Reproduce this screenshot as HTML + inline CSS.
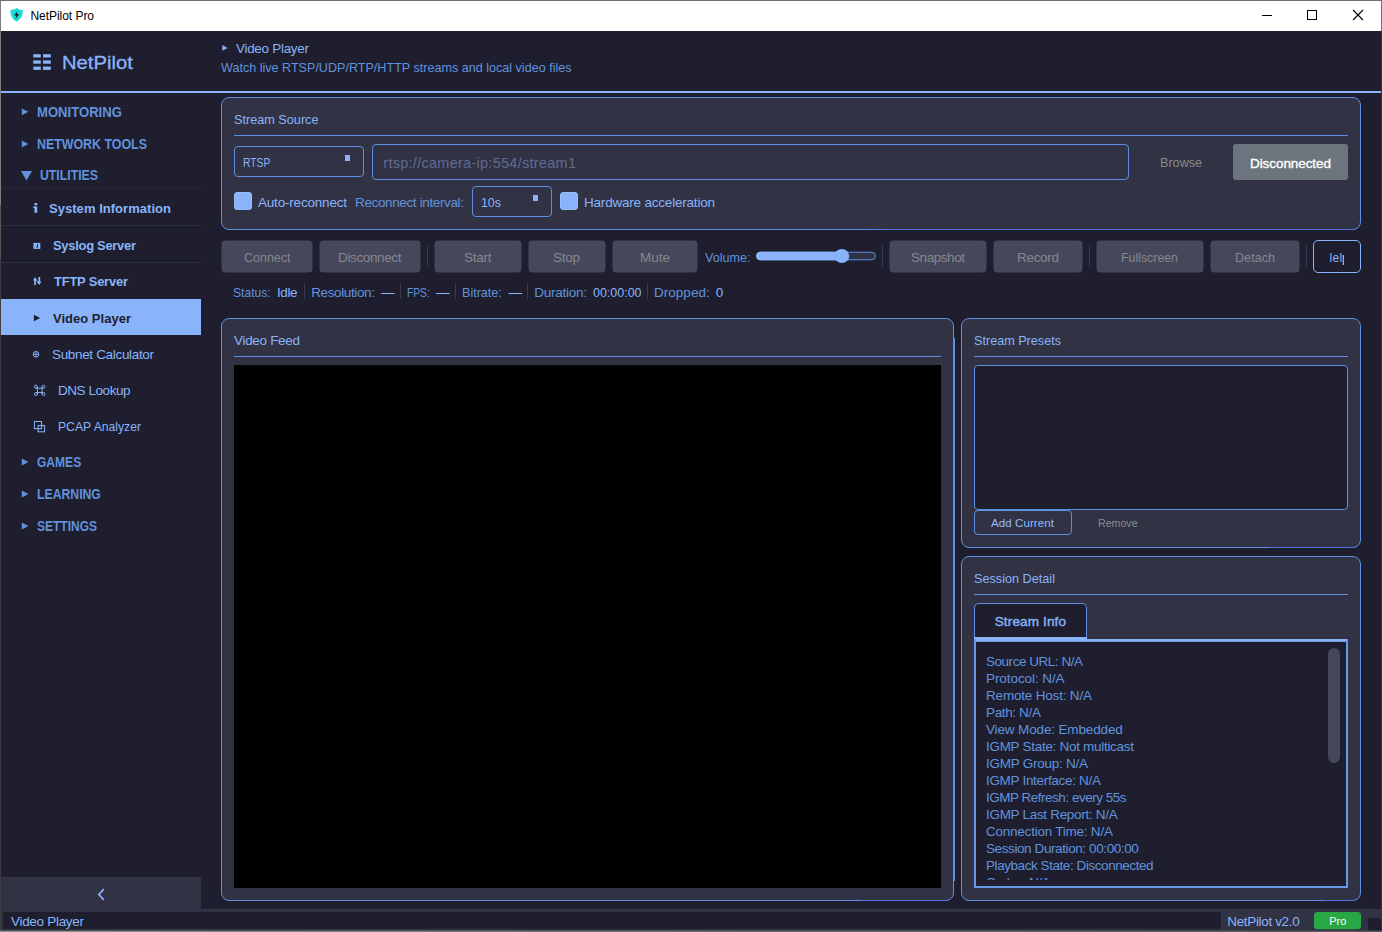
<!DOCTYPE html>
<html lang="en">
<head>
<meta charset="utf-8">
<title>NetPilot Pro</title>
<style>
*{box-sizing:border-box;margin:0;padding:0}
html,body{width:1382px;height:932px;overflow:hidden;background:#1e1e2e}
body{position:relative;font-family:"Liberation Sans",sans-serif;font-size:13px;color:#89b4fa}
.a{position:absolute}
.t{position:absolute;white-space:nowrap;line-height:20px;height:20px}
.panel{position:absolute;background:#313244;border:1px solid #5d90e0;border-radius:8px}
.hl{position:absolute;height:1px;background:#5d90e0}
.btn{position:absolute;top:240.6px;height:31.8px;background:#45475a;border-radius:4.5px}
.vsep{position:absolute;top:245px;height:22px;width:1px;background:#3a3b4f}
.ssep{position:absolute;top:283px;height:16px;width:1px;background:#3a3b4f}
.field{position:absolute;background:#313244;border:1px solid #5d90e0;border-radius:4px}
.chk{position:absolute;width:18px;height:18px;top:192px;background:#89b4fa;border:1px solid #96befb;border-radius:3px}
.dot{position:absolute;width:5px;height:6px;background:#89b4fa}
.nsep{position:absolute;left:1px;width:200px;height:1px;background:#2d2f47}
</style>
</head>
<body>
<!-- window chrome -->
<div class="a" style="left:0;top:0;width:1382px;height:31px;background:#fff"></div>
<div class="a" style="left:0;top:0;width:1382px;height:1px;background:#6f6f6f"></div>
<div class="a" style="left:0;top:0;width:1px;height:932px;background:linear-gradient(180deg,#7d7d7d 0,#7d7d7d 205px,#585858 205px,#585858 258px,#3e3e42 258px)"></div>
<div class="a" style="left:1381px;top:0;width:1px;height:31px;background:#6f6f6f"></div>
<!-- app icon -->
<svg class="a" style="left:10.3px;top:8.2px" width="13.2" height="13.6" viewBox="0 0 13.2 13.6">
<path d="M6.6 0 C5.1 1.3 3 1.9 0.5 1.9 C0.2 6.2 1.3 10.6 6.6 13.6 C11.9 10.6 13 6.2 12.7 1.9 C10.2 1.9 8.1 1.3 6.6 0 Z" fill="#19dcd2"/>
<path d="M7.6 2.9 L4 7.5 H6.3 L5.5 10.9 L9.3 6.1 H6.9 Z" fill="#10202b"/>
</svg>
<!-- caption buttons -->
<div class="a" style="left:1262px;top:15px;width:10px;height:1px;background:#000"></div>
<div class="a" style="left:1307px;top:10px;width:10px;height:10px;border:1px solid #000"></div>
<svg class="a" style="left:1352px;top:9px" width="12" height="12" viewBox="0 0 12 12"><path d="M1 1 L11 11 M11 1 L1 11" stroke="#000" stroke-width="1.1" fill="none"/></svg>

<!-- header accent line -->
<div class="a" style="left:1px;top:91px;width:1381px;height:2px;background:#89b4fa"></div>

<!-- logo icon -->
<svg class="a" style="left:33px;top:54px" width="18" height="16" viewBox="0 0 18 16"><g fill="#89b4fa">
<rect x="0.3" y="0.2" width="7.5" height="3.3"/><rect x="10" y="0.2" width="7.8" height="3.3"/>
<rect x="0.3" y="6.4" width="7.5" height="3.3"/><rect x="10" y="6.4" width="7.8" height="3.3"/>
<rect x="0.3" y="12.6" width="7.5" height="3.3"/><rect x="10" y="12.6" width="7.8" height="3.3"/>
</g></svg>

<!-- sidebar -->
<div class="nsep" style="top:188px;background:#252639"></div>
<div class="nsep" style="top:225px"></div>
<div class="nsep" style="top:262px"></div>
<div class="a" style="left:1px;top:299px;width:200px;height:36px;background:#89b4fa"></div>
<div class="a" style="left:1px;top:877px;width:200px;height:32px;background:#313244"></div>
<!-- sidebar arrows + icons -->
<svg class="a" style="left:0;top:93px" width="201" height="816" viewBox="0 93 201 816">
 <g fill="#6191dc">
  <path d="M21.8 108.4 L28.4 111.8 L21.8 115.2 Z"/>
  <path d="M21.8 140.6 L28.4 144 L21.8 147.4 Z"/>
  <path d="M21 170.9 L32 170.9 L26.5 180.4 Z"/>
  <path d="M21.8 458.6 L28.4 462 L21.8 465.4 Z"/>
  <path d="M21.8 490.6 L28.4 494 L21.8 497.4 Z"/>
  <path d="M21.8 522.6 L28.4 526 L21.8 529.4 Z"/>
 </g>
 <!-- i -->
 <g fill="#89b4fa">
  <rect x="34.5" y="203" width="2.7" height="2.3"/>
  <path d="M33.2 206.6 H37.2 V212.7 H34.5 V208.1 H33.2 Z"/>
  <!-- syslog square -->
  <rect x="33.4" y="242.9" width="6.9" height="6"/>
  <!-- tftp -->
  <path d="M34.2 285 V280.6 H32.9 L35 277 L37.1 280.6 H35.9 V285 Z"/>
  <path d="M38.4 277 V281.4 H37.1 L39.3 285 L41.5 281.4 H40.2 V277 Z"/>
  <path d="M35.6 278.2 L38.8 283.6 L38.2 284 L35 278.6 Z"/>
 </g>
 <path d="M37 244.1 H37.9 V247.4 H36.1 V246.5 H37 Z" fill="#1e1e2e"/>
 <!-- selected play -->
 <path d="M33.9 314.8 L40.2 318 L33.9 321.2 Z" fill="#1e1e2e"/>
 <!-- circled plus -->
 <g stroke="#89b4fa" fill="none" stroke-width="1">
  <circle cx="36" cy="354.3" r="2.8"/>
  <path d="M33.2 354.3 H38.8 M36 351.5 V357.1" stroke-width="0.9"/>
  <!-- command glyph -->
  <path d="M37.4 386.7 V394.1 M42 386.7 V394.1 M35.9 388.2 H43.5 M35.9 392.6 H43.5" stroke-width="0.95"/>
  <circle cx="35.9" cy="386.7" r="1.5" stroke-width="0.95"/><circle cx="43.5" cy="386.7" r="1.5" stroke-width="0.95"/>
  <circle cx="35.9" cy="394.1" r="1.5" stroke-width="0.95"/><circle cx="43.5" cy="394.1" r="1.5" stroke-width="0.95"/>
  <!-- overlapped squares -->
  <rect x="34.4" y="421.5" width="7.2" height="7.2"/>
  <rect x="38" y="425.6" width="6.6" height="6.2"/>
 </g>
 <path d="M103.8 889.2 L98.9 894.5 L103.8 899.8" stroke="#89b4fa" stroke-width="1.7" fill="none"/>
</svg>

<!-- page header arrow -->
<svg class="a" style="left:221px;top:43px" width="8" height="10" viewBox="0 0 8 10"><path d="M1.3 2 L6.5 4.9 L1.3 7.8 Z" fill="#89b4fa"/></svg>

<!-- Stream Source panel -->
<div class="panel" style="left:221px;top:97px;width:1140px;height:133px"></div>
<div class="hl" style="left:234px;top:135px;width:1114px"></div>
<div class="field" style="left:234px;top:146px;width:130px;height:31px"></div>
<div class="dot" style="left:345px;top:155px"></div>
<div class="field" style="left:372px;top:144px;width:757px;height:36px"></div>
<div class="a" style="left:1233px;top:144px;width:115px;height:36px;background:#6c757d;border-radius:3px"></div>
<div class="chk" style="left:234px"></div>
<div class="field" style="left:472px;top:186px;width:80px;height:31px"></div>
<div class="dot" style="left:533px;top:195px"></div>
<div class="chk" style="left:560px"></div>

<!-- toolbar -->
<svg class="a" style="left:0;top:236px" width="1382" height="42" viewBox="0 236 1382 42"><rect x="221.5" y="240.55" width="91" height="31.9" rx="4" fill="#45475a"/><rect x="319.5" y="240.55" width="101" height="31.9" rx="4" fill="#45475a"/><rect x="434.5" y="240.55" width="87" height="31.9" rx="4" fill="#45475a"/><rect x="528.5" y="240.55" width="77" height="31.9" rx="4" fill="#45475a"/><rect x="612.5" y="240.55" width="85" height="31.9" rx="4" fill="#45475a"/><rect x="889.5" y="240.55" width="97" height="31.9" rx="4" fill="#45475a"/><rect x="993.5" y="240.55" width="89" height="31.9" rx="4" fill="#45475a"/><rect x="1096.5" y="240.55" width="107" height="31.9" rx="4" fill="#45475a"/><rect x="1210.5" y="240.55" width="89" height="31.9" rx="4" fill="#45475a"/><rect x="756.5" y="252.2" width="119" height="7.6" rx="3.8" fill="#313244" stroke="#5d90e0" stroke-width="1"/><rect x="756" y="251.7" width="88" height="8.6" rx="4.3" fill="#89b4fa"/><ellipse cx="841.8" cy="255.95" rx="7.4" ry="7.05" fill="#89b4fa"/></svg>
<div class="vsep" style="left:427px"></div>
<div class="vsep" style="left:882px"></div>
<div class="vsep" style="left:1089px"></div>
<div class="vsep" style="left:1306px"></div>
<div class="a" style="left:1313px;top:240px;width:48px;height:33px;border:1px solid #89b4fa;border-radius:5px;background:#1e1e2e"></div>
<svg class="a" style="left:1340px;top:250px" width="8" height="18" viewBox="1340 250 8 18"><rect x="1342.7" y="255" width="1.3" height="10" fill="#89b4fa"/></svg>

<!-- status row separators -->
<div class="ssep" style="left:304px"></div>
<div class="ssep" style="left:400px"></div>
<div class="ssep" style="left:455px"></div>
<div class="ssep" style="left:527px"></div>
<div class="ssep" style="left:647px"></div>

<!-- Video Feed panel -->
<div class="panel" style="left:221px;top:318px;width:733px;height:583px"></div>
<div class="a" style="left:954px;top:338px;width:1px;height:543px;background:#5d90e0"></div>
<div class="hl" style="left:234px;top:356px;width:707px"></div>
<div class="a" style="left:234px;top:365px;width:707px;height:523px;background:#000"></div>

<!-- Stream Presets panel -->
<div class="panel" style="left:961px;top:318px;width:400px;height:230px"></div>
<div class="hl" style="left:974px;top:356px;width:374px"></div>
<div class="a" style="left:974px;top:365px;width:374px;height:145px;background:#1e1e2e;border:1px solid #5d90e0;border-radius:4px"></div>
<div class="a" style="left:974px;top:510px;width:98px;height:25px;border:1px solid #5d90e0;border-radius:4px"></div>

<!-- Session Detail panel -->
<div class="panel" style="left:961px;top:556px;width:400px;height:345px"></div>
<div class="hl" style="left:974px;top:594px;width:374px"></div>
<div class="a" style="left:974px;top:603px;width:113px;height:37px;background:#1e1e2e;border:1px solid #5d90e0;border-bottom:none;border-radius:5px 5px 0 0"></div>
<div class="a" style="left:974px;top:637px;width:113px;height:4px;background:#89b4fa"></div>
<div class="a" style="left:974px;top:639px;width:374px;height:249px;background:#1e1e2e;border:2px solid #6798e6;border-top:none;overflow:hidden">
 <div class="a" style="left:-2px;top:0;width:374px;height:2px;background:#89b4fa"></div>
 <div class="a" style="left:-2px;top:2px;width:374px;height:1px;background:#6798e6"></div>
 <div class="a" style="left:0;top:0;width:340px;height:241.4px;overflow:hidden"><div class="a info" style="left:10px;top:13.7px;line-height:17px;font-size:13.5px;color:#6193de;white-space:nowrap"><div style="letter-spacing:-0.468px">Source URL: N/A</div><div style="letter-spacing:-0.078px">Protocol: N/A</div><div style="letter-spacing:-0.186px">Remote Host: N/A</div><div style="letter-spacing:-0.360px">Path: N/A</div><div style="letter-spacing:-0.141px">View Mode: Embedded</div><div style="letter-spacing:-0.294px">IGMP State: Not multicast</div><div style="letter-spacing:-0.260px">IGMP Group: N/A</div><div style="letter-spacing:-0.314px">IGMP Interface: N/A</div><div style="letter-spacing:-0.491px">IGMP Refresh: every 55s</div><div style="letter-spacing:-0.306px">IGMP Last Report: N/A</div><div style="letter-spacing:-0.232px">Connection Time: N/A</div><div style="letter-spacing:-0.402px">Session Duration: 00:00:00</div><div style="letter-spacing:-0.436px">Playback State: Disconnected</div><div style="letter-spacing:-0.503px">Codec: N/A</div></div></div>
 <div class="a" style="left:352px;top:9px;width:12px;height:115px;background:#45475a;border-radius:6px"></div>
</div>

<div class="a" style="left:852px;top:229px;width:502px;height:1px;background:linear-gradient(90deg,#5d90e0,#5a6fe0 8%,#5a6fe0)"></div>
<div class="a" style="left:861px;top:900px;width:86px;height:1px;background:#5a6fe0"></div>
<div class="a" style="left:1269px;top:547px;width:85px;height:1px;background:#5a6fe0"></div>
<div class="a" style="left:1323px;top:900px;width:31px;height:1px;background:#5a6fe0"></div>
<div class="a" style="left:1381px;top:31px;width:1px;height:901px;background:#34343e"></div>
<!-- status bar -->
<svg class="a" style="left:0;top:905px" width="1382" height="27" viewBox="0 905 1382 27">
<rect x="1" y="908.8" width="1380" height="22" fill="#313244"/>
<rect x="3" y="911.9" width="1218" height="16.9" fill="#1e1e2e"/>
<rect x="1314" y="911.9" width="47" height="17.3" rx="3.5" fill="#28a745"/>
<rect x="1368" y="918" width="13" height="13" fill="#1e1e2e"/>
<defs><linearGradient id="bg" x1="0" x2="1"><stop offset="0" stop-color="#8c8c8c"/><stop offset="0.6" stop-color="#6a6a6c"/><stop offset="1" stop-color="#58585c"/></linearGradient></defs>
<rect x="0" y="930.6" width="1382" height="1.4" fill="url(#bg)"/>
</svg>

<div class="t" style="left:30.5px;top:6.3px;font-size:12px;font-weight:400;color:#000;letter-spacing:-0.048px;">NetPilot Pro</div>
<div class="t" style="left:61.7px;top:53.0px;font-size:18px;font-weight:400;color:#89b4fa;letter-spacing:0.000px;-webkit-text-stroke:0.3px #89b4fa;transform:scaleX(1.1233);transform-origin:0 50%;">NetPilot</div>
<div class="t" style="left:36.7px;top:101.9px;font-size:14px;font-weight:700;color:#6191dc;letter-spacing:0.000px;transform:scaleX(0.9355);transform-origin:0 50%;">MONITORING</div>
<div class="t" style="left:36.7px;top:134.2px;font-size:14px;font-weight:700;color:#6191dc;letter-spacing:0.000px;transform:scaleX(0.8850);transform-origin:0 50%;">NETWORK TOOLS</div>
<div class="t" style="left:40.0px;top:165.2px;font-size:14px;font-weight:700;color:#6191dc;letter-spacing:0.000px;transform:scaleX(0.8771);transform-origin:0 50%;">UTILITIES</div>
<div class="t" style="left:36.8px;top:452.2px;font-size:14px;font-weight:700;color:#6191dc;letter-spacing:0.000px;transform:scaleX(0.8609);transform-origin:0 50%;">GAMES</div>
<div class="t" style="left:36.7px;top:484.2px;font-size:14px;font-weight:700;color:#6191dc;letter-spacing:0.000px;transform:scaleX(0.8738);transform-origin:0 50%;">LEARNING</div>
<div class="t" style="left:37.0px;top:516.2px;font-size:14px;font-weight:700;color:#6191dc;letter-spacing:0.000px;transform:scaleX(0.8570);transform-origin:0 50%;">SETTINGS</div>
<div class="t" style="left:49.0px;top:199.1px;font-size:13px;font-weight:700;color:#89b4fa;letter-spacing:0.038px;">System Information</div>
<div class="t" style="left:53.0px;top:236.0px;font-size:13px;font-weight:700;color:#89b4fa;letter-spacing:-0.310px;">Syslog Server</div>
<div class="t" style="left:54.0px;top:271.8px;font-size:13px;font-weight:700;color:#89b4fa;letter-spacing:-0.236px;">TFTP Server</div>
<div class="t" style="left:53.0px;top:308.8px;font-size:13px;font-weight:700;color:#1e1e2e;letter-spacing:0.017px;">Video Player</div>
<div class="t" style="left:52.0px;top:345.4px;font-size:13.5px;font-weight:400;color:#89b4fa;letter-spacing:-0.333px;">Subnet Calculator</div>
<div class="t" style="left:58.0px;top:381.3px;font-size:13.5px;font-weight:400;color:#89b4fa;letter-spacing:-0.450px;">DNS Lookup</div>
<div class="t" style="left:58.0px;top:417.3px;font-size:13.5px;font-weight:400;color:#89b4fa;letter-spacing:0.000px;transform:scaleX(0.9016);transform-origin:0 50%;">PCAP Analyzer</div>
<div class="t" style="left:236.0px;top:38.8px;font-size:13.5px;font-weight:400;color:#89b4fa;letter-spacing:-0.301px;">Video Player</div>
<div class="t" style="left:221.0px;top:58.3px;font-size:13.5px;font-weight:400;color:#6193de;letter-spacing:0.000px;transform:scaleX(0.9319);transform-origin:0 50%;">Watch live RTSP/UDP/RTP/HTTP streams and local video files</div>
<div class="t" style="left:234.0px;top:110.4px;font-size:13.5px;font-weight:400;color:#89b4fa;letter-spacing:0.000px;transform:scaleX(0.9384);transform-origin:0 50%;">Stream Source</div>
<div class="t" style="left:243.0px;top:152.8px;font-size:12.5px;font-weight:400;color:#89b4fa;letter-spacing:0.000px;transform:scaleX(0.8242);transform-origin:0 50%;">RTSP</div>
<div class="t" style="left:383.3px;top:152.8px;font-size:14.5px;font-weight:400;color:#616b90;letter-spacing:0.272px;">rtsp://camera-ip:554/stream1</div>
<div class="t" style="left:1160.0px;top:152.8px;font-size:12.5px;font-weight:400;color:#8a8b8e;letter-spacing:0.062px;">Browse</div>
<div class="t" style="left:1250.0px;top:154.3px;font-size:13.5px;font-weight:400;color:#fff;letter-spacing:-0.074px;-webkit-text-stroke:0.35px #fff;">Disconnected</div>
<div class="t" style="left:258.0px;top:192.8px;font-size:13.5px;font-weight:400;color:#89b4fa;letter-spacing:-0.197px;">Auto-reconnect</div>
<div class="t" style="left:355.0px;top:192.8px;font-size:13.5px;font-weight:400;color:#6193de;letter-spacing:-0.365px;">Reconnect interval:</div>
<div class="t" style="left:481.0px;top:192.8px;font-size:12.5px;font-weight:400;color:#89b4fa;letter-spacing:-0.078px;">10s</div>
<div class="t" style="left:584.0px;top:192.8px;font-size:13.5px;font-weight:400;color:#89b4fa;letter-spacing:-0.204px;">Hardware acceleration</div>
<div class="t" style="left:243.5px;top:247.8px;font-size:13.5px;font-weight:400;color:#85878f;letter-spacing:0.000px;transform:scaleX(0.9245);transform-origin:0 50%;">Connect</div>
<div class="t" style="left:338.0px;top:247.8px;font-size:13.5px;font-weight:400;color:#85878f;letter-spacing:-0.366px;">Disconnect</div>
<div class="t" style="left:464.0px;top:247.8px;font-size:13.5px;font-weight:400;color:#85878f;letter-spacing:-0.254px;">Start</div>
<div class="t" style="left:553.0px;top:247.8px;font-size:13.5px;font-weight:400;color:#85878f;letter-spacing:-0.260px;">Stop</div>
<div class="t" style="left:640.0px;top:247.8px;font-size:13.5px;font-weight:400;color:#85878f;letter-spacing:-0.005px;">Mute</div>
<div class="t" style="left:704.5px;top:247.8px;font-size:13.5px;font-weight:400;color:#6193de;letter-spacing:0.000px;transform:scaleX(0.9327);transform-origin:0 50%;">Volume:</div>
<div class="t" style="left:911.0px;top:247.8px;font-size:13.5px;font-weight:400;color:#85878f;letter-spacing:-0.435px;">Snapshot</div>
<div class="t" style="left:1017.0px;top:247.8px;font-size:13.5px;font-weight:400;color:#85878f;letter-spacing:-0.306px;">Record</div>
<div class="t" style="left:1121.0px;top:247.8px;font-size:13.5px;font-weight:400;color:#85878f;letter-spacing:0.000px;transform:scaleX(0.9152);transform-origin:0 50%;">Fullscreen</div>
<div class="t" style="left:1235.0px;top:247.8px;font-size:13.5px;font-weight:400;color:#85878f;letter-spacing:0.000px;transform:scaleX(0.9350);transform-origin:0 50%;">Detach</div>
<div class="t" style="left:1329.6px;top:247.8px;font-size:12px;font-weight:400;color:#89b4fa;letter-spacing:0.342px;">lel</div>
<div class="t" style="left:233.3px;top:283.4px;font-size:13.5px;font-weight:400;color:#6193de;letter-spacing:0.000px;transform:scaleX(0.8970);transform-origin:0 50%;">Status:</div>
<div class="t" style="left:277.0px;top:283.4px;font-size:13.5px;font-weight:400;color:#89b4fa;letter-spacing:-0.427px;">Idle</div>
<div class="t" style="left:311.2px;top:283.4px;font-size:13.5px;font-weight:400;color:#6193de;letter-spacing:-0.375px;">Resolution:</div>
<div class="t" style="left:381.0px;top:283.4px;font-size:13.5px;font-weight:400;color:#89b4fa;letter-spacing:0.000px;">—</div>
<div class="t" style="left:407.2px;top:283.4px;font-size:13.5px;font-weight:400;color:#6193de;letter-spacing:0.000px;transform:scaleX(0.7596);transform-origin:0 50%;">FPS:</div>
<div class="t" style="left:436.0px;top:283.4px;font-size:13.5px;font-weight:400;color:#89b4fa;letter-spacing:0.000px;">—</div>
<div class="t" style="left:462.2px;top:283.4px;font-size:13.5px;font-weight:400;color:#6193de;letter-spacing:0.000px;transform:scaleX(0.9303);transform-origin:0 50%;">Bitrate:</div>
<div class="t" style="left:508.5px;top:283.4px;font-size:13.5px;font-weight:400;color:#89b4fa;letter-spacing:0.000px;">—</div>
<div class="t" style="left:534.2px;top:283.4px;font-size:13.5px;font-weight:400;color:#6193de;letter-spacing:-0.248px;">Duration:</div>
<div class="t" style="left:592.5px;top:283.4px;font-size:13.5px;font-weight:400;color:#89b4fa;letter-spacing:0.000px;transform:scaleX(0.9227);transform-origin:0 50%;">00:00:00</div>
<div class="t" style="left:654.0px;top:283.4px;font-size:13.5px;font-weight:400;color:#6193de;letter-spacing:0.022px;">Dropped:</div>
<div class="t" style="left:715.7px;top:283.4px;font-size:13.5px;font-weight:400;color:#89b4fa;letter-spacing:0.000px;">0</div>
<div class="t" style="left:234.0px;top:331.3px;font-size:13.5px;font-weight:400;color:#89b4fa;letter-spacing:-0.312px;">Video Feed</div>
<div class="t" style="left:974.0px;top:331.3px;font-size:13.5px;font-weight:400;color:#89b4fa;letter-spacing:0.000px;transform:scaleX(0.9352);transform-origin:0 50%;">Stream Presets</div>
<div class="t" style="left:991.0px;top:512.8px;font-size:11.5px;font-weight:400;color:#94bbfb;letter-spacing:0.098px;">Add Current</div>
<div class="t" style="left:1098.4px;top:512.8px;font-size:11.5px;font-weight:400;color:#8a8b8e;letter-spacing:0.000px;transform:scaleX(0.9246);transform-origin:0 50%;">Remove</div>
<div class="t" style="left:974.0px;top:569.3px;font-size:13.5px;font-weight:400;color:#89b4fa;letter-spacing:0.000px;transform:scaleX(0.9386);transform-origin:0 50%;">Session Detail</div>
<div class="t" style="left:994.7px;top:612.3px;font-size:13.5px;font-weight:400;color:#89b4fa;letter-spacing:0.152px;-webkit-text-stroke:0.4px #89b4fa;">Stream Info</div>
<div class="t" style="left:11.0px;top:911.8px;font-size:13.5px;font-weight:400;color:#89b4fa;letter-spacing:-0.301px;">Video Player</div>
<div class="t" style="left:1227.3px;top:911.8px;font-size:13.5px;font-weight:400;color:#89b4fa;letter-spacing:-0.346px;">NetPilot v2.0</div>
<div class="t" style="left:1329.3px;top:911.2px;font-size:11px;font-weight:400;color:#fff;letter-spacing:-0.062px;">Pro</div>
</body>
</html>
